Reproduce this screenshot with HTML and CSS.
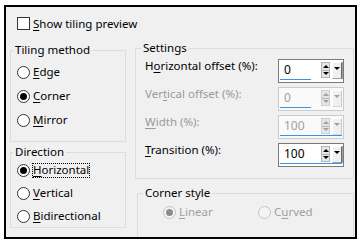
FILE: index.html
```html
<!doctype html>
<html>
<head>
<meta charset="utf-8">
<title>Tiling</title>
<link rel="stylesheet" href="styles.css">
</head>
<body>
	<div class="dialog">
		<label class="checkrow">
			<span class="checkbox"></span>
			<span class="txt"><u>S</u>how tiling preview</span>
		</label>

		<div class="columns">
			<div class="leftcol">
				<fieldset class="group tiling">
					<legend>Tiling method</legend>
					<div class="radiolist">
						<label class="radio"><span class="dot"></span><span class="txt"><u>E</u>dge</span></label>
						<label class="radio"><span class="dot on"></span><span class="txt"><u>C</u>orner</span></label>
						<label class="radio"><span class="dot"></span><span class="txt"><u>M</u>irror</span></label>
					</div>
				</fieldset>

				<fieldset class="group direction">
					<legend>Direction</legend>
					<div class="radiolist">
						<label class="radio"><span class="dot on"></span><span class="txt focus"><u>H</u>orizontal</span></label>
						<label class="radio"><span class="dot"></span><span class="txt"><u>V</u>ertical</span></label>
						<label class="radio"><span class="dot"></span><span class="txt"><u>B</u>idirectional</span></label>
					</div>
				</fieldset>
			</div> <!-- end leftcol -->

			<div class="rightcol">
				<fieldset class="group settings">
					<legend>Settings</legend>

					<div class="setrow">
						<span class="setlabel">H<u>o</u>rizontal offset (%):</span>
						<div class="spin">
							<div class="spintop">
								<span class="spinval">0</span>
								<span class="updown"><i class="up"></i><i class="down"></i></span>
								<span class="drop"><i class="down"></i></span>
							</div>
							<div class="spinbar" style="width: 50%;"></div>
						</div>
					</div>

					<div class="setrow off">
						<span class="setlabel">Ver<u>t</u>ical offset (%):</span>
						<div class="spin">
							<div class="spintop">
								<span class="spinval">0</span>
								<span class="updown"><i class="up"></i><i class="down"></i></span>
								<span class="drop"><i class="down"></i></span>
							</div>
							<div class="spinbar" style="width: 50%;"></div>
						</div>
					</div>

					<div class="setrow off">
						<span class="setlabel"><u>W</u>idth (%):</span>
						<div class="spin">
							<div class="spintop">
								<span class="spinval">100</span>
								<span class="updown"><i class="up"></i><i class="down"></i></span>
								<span class="drop"><i class="down"></i></span>
							</div>
							<div class="spinbar" style="width: 100%;"></div>
						</div>
					</div>

					<div class="setrow">
						<span class="setlabel"><u>T</u>ransition (%):</span>
						<div class="spin">
							<div class="spintop">
								<span class="spinval">100</span>
								<span class="updown"><i class="up"></i><i class="down"></i></span>
								<span class="drop"><i class="down"></i></span>
							</div>
							<div class="spinbar" style="width: 100%;"></div>
						</div>
					</div>
				</fieldset>

				<fieldset class="group corner">
					<legend>Corner style</legend>
					<div class="radiorow">
						<label class="radio off"><span class="dot on"></span><span class="txt"><u>L</u>inear</span></label>
						<label class="radio off"><span class="dot"></span><span class="txt">C<u>u</u>rved</span></label>
					</div>
				</fieldset>
			</div> <!-- end rightcol -->
		</div>
	</div> <!-- end dialog -->
</body>
</html>
```

FILE: styles.css
```css
/* 기본 */
html, body {margin: 0; padding: 0; background-color: #ffffff;}
body {width: 363px; height: 244px; font-family: 'Noto Sans', 'Open Sans', sans-serif; font-size: 11.5px; color: #000000;}
u {text-decoration-thickness: 1px; text-underline-offset: 2px;}

.dialog {box-sizing: border-box; width: 353px; height: 234px; margin: 5px 0 0 4px; border: 2px solid #000000; background-color: #f0f0f0; overflow: hidden; padding: 10px 0 0 4px;}

/* 체크박스 */
.checkrow {display: flex; align-items: center; height: 13px; margin-left: 7px;}
.checkbox {box-sizing: border-box; width: 13px; height: 13px; border: 1px solid #333333; background-color: #ffffff;}
.checkrow>.txt {margin-left: 3px; line-height: 16px;}

.columns {display: flex; align-items: flex-start; margin-top: 10px;}
.leftcol {display: flex; flex-direction: column; width: 116px; margin-top: 2px;}
.rightcol {display: flex; flex-direction: column; width: 219px; margin-left: 9px;}

/* 그룹박스 */
.group {box-sizing: border-box; margin: 0; padding: 0; border: 1px solid #dcdcdc; min-width: 0;}
.group>legend {padding: 0 2px; margin-left: 2px; line-height: 16px;}
.settings>legend {margin-left: -4px;}
.corner>legend {margin-left: 5px;}

.tiling {height: 100px;}
.direction {height: 84px; margin-top: 2px;}
.settings {height: 139px; padding: 3px 9px 0 9px;}
.corner {height: 60px; margin-top: 6px; margin-left: 2px; width: 217px;}

/* 라디오 */
.radiolist {display: flex; flex-direction: column; padding-left: 6px;}
.tiling>.radiolist {padding-top: 2px;}
.tiling .radio {height: 24px;}
.direction>.radiolist {margin-top: -1px;}
.direction .radio {height: 23px;}
.radio {display: flex; align-items: center;}
.radio>.dot {box-sizing: border-box; width: 13px; height: 13px; border: 1px solid #333333; border-radius: 50%; background-color: #ffffff; display: flex; align-items: center; justify-content: center; flex: none;}
.radio>.dot.on::after {content: ""; width: 7px; height: 7px; border-radius: 50%; background-color: #000000;}
.radio>.txt {margin-left: 2px; border: 1px solid transparent; line-height: 12px; padding: 0 0 1px 0;}
.radio>.txt.focus {border: 1px dotted #000000;}

.radiorow {display: flex; padding-left: 25px; margin-top: -1px;}
.radiorow>.radio {width: 99px; height: 24px;}
.radio.off {color: #a0a0a0;}
.radio.off>.dot {border-color: #c4c4c4; background-color: #f4f4f4;}
.radio.off>.dot.on::after {background-color: #8c8c8c;}

/* 설정 */
.setrow {display: flex; align-items: flex-start; height: 24px; margin-bottom: 4px;}
.setlabel {flex: 1; line-height: 16px; margin-top: -1px;}
.setrow.off>.setlabel {color: #999999;}

.spin {box-sizing: border-box; width: 66px; height: 24px; border: 1px solid #7a7a7a; background-color: #ffffff; display: flex; flex-direction: column; padding: 2px 1px 1px 1px;}
.spintop {display: flex; height: 17px;}
.spinval {flex: 1; padding-left: 4px; line-height: 16px; font-size: 12px;}
.updown {box-sizing: border-box; width: 9px; height: 16px; display: flex; flex-direction: column; border: 1px solid #b4b4b4; background-color: #e6e6e6;}
.updown>i {flex: 1; display: flex; align-items: center; justify-content: center;}
.updown>i.up {border-bottom: 1px solid #b4b4b4;}
.up::after {content: ""; border-left: 3px solid transparent; border-right: 3px solid transparent; border-bottom: 3px solid #000000;}
.down::after {content: ""; border-left: 3px solid transparent; border-right: 3px solid transparent; border-top: 3px solid #000000;}
.drop {box-sizing: border-box; width: 10px; height: 17px; margin-left: 2px; display: flex; align-items: center; justify-content: center; background-color: #f0f0f0; border-top: 1px solid #ffffff; border-left: 1px solid #ffffff; border-right: 1px solid #696969; border-bottom: 1px solid #a0a0a0; box-shadow: 1px 0 0 #a0a0a0;}
.drop>i {display: flex; margin-bottom: 4px;}
.spinbar {height: 3px; margin-top: auto; margin-bottom: 1px; background-color: #3b93e3;}

.setrow.off .spin {border-color: #cccccc; background-color: #fafafa;}
.setrow.off .spinval {color: #a0a0a0;}
.setrow.off .up::after {border-bottom-color: #a0a0a0;}
.setrow.off .down::after {border-top-color: #a0a0a0;}
.setrow.off .updown {border-color: #d0d0d0;}
.setrow.off .drop {border-right-color: #c8c8c8; border-bottom-color: #d8d8d8; box-shadow: none;}
```
